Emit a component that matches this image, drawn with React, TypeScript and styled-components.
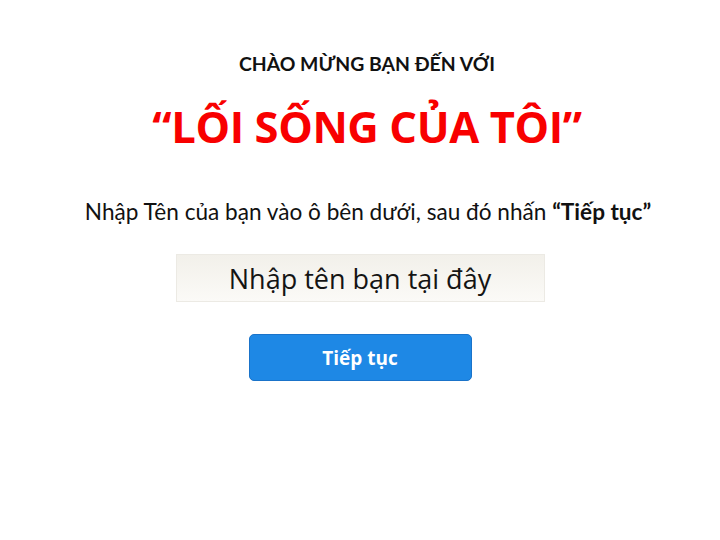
import React from "react";
import styled, { createGlobalStyle } from "styled-components";

const GlobalStyle = createGlobalStyle`
  html, body {
    margin: 0;
    padding: 0;
    background: #fff;
  }
  body {
    font-family: "Open Sans", "Noto Sans", sans-serif;
    color: #111;
  }
`;

const Page = styled.main`
  width: 720px;
  height: 540px;
  display: flex;
  flex-direction: column;
  align-items: center;
  padding-top: 52px;
  box-sizing: border-box;
`;

const Welcome = styled.h2`
  margin: 0;
  padding-left: 14px;
  font-family: "Lato", "Open Sans", sans-serif;
  font-size: 19.4px;
  font-weight: 700;
  line-height: 24px;
  color: #111;
`;

const Title = styled.h1`
  margin: 23px 0 0;
  padding-left: 14px;
  font-family: "Open Sans", sans-serif;
  font-size: 43.5px;
  font-weight: 700;
  line-height: 56px;
  color: #f80000;
  letter-spacing: -0.4px;
`;

const Hint = styled.p`
  margin: 43px 0 0;
  padding-left: 16px;
  font-family: "Lato", "Open Sans", sans-serif;
  font-size: 22.6px;
  line-height: 28px;
  color: #111;

  b {
    font-weight: 700;
  }
`;

const NameInput = styled.input`
  margin-top: 28px;
  width: 369px;
  height: 48px;
  box-sizing: border-box;
  border: 1px solid #eceae4;
  background: linear-gradient(to bottom, #f2f0ea, #fbfaf7);
  font-family: "Open Sans", sans-serif;
  font-size: 27px;
  text-align: center;
  color: #111;
  outline: none;

  &::placeholder {
    color: #141414;
    opacity: 1;
  }
`;

const Button = styled.button`
  margin-top: 32px;
  width: 223px;
  height: 47px;
  border: 1px solid #1a73c9;
  border-radius: 5px;
  background: #1e88e5;
  color: #fff;
  font-family: "Open Sans", sans-serif;
  font-size: 19px;
  font-weight: 700;
  cursor: pointer;
`;

function App() {
  return (
    <>
      <GlobalStyle />
      <Page>
        <Welcome>CHÀO MỪNG BẠN ĐẾN VỚI</Welcome>
        <Title>“LỐI SỐNG CỦA TÔI”</Title>
        <Hint>
          Nhập Tên của bạn vào ô bên dưới, sau đó nhấn <b>“Tiếp tục”</b>
        </Hint>
        <NameInput placeholder="Nhập tên bạn tại đây" />
        <Button>Tiếp tục</Button>
      </Page>
    </>
  );
}

export default App;
